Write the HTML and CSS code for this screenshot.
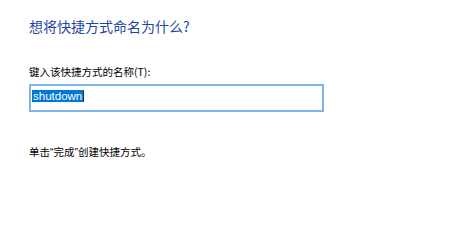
FILE: index.html
```html
<html>
    <link rel="stylesheet" href="styles.css">
<head>
    <meta charset="UTF-8">
    <meta name="viewport" content="width=device-width, initial-scale=1.0">
</head>
<body>
    <div class="page">
        <div class="title">想将快捷方式命名为什么?</div>
        <div class="label">键入该快捷方式的名称(T):</div>
        <div class="textbox"><span class="selected">shutdown</span><span class="caret"></span></div>
        <div class="hint">单击“完成”创建快捷方式。</div>
    </div>
</body>
</html>
```
FILE: styles.css
```css
body {
    margin: 0;
    background-color: #fff;
    font-family: "Noto Sans CJK SC", sans-serif;
    color: #000;
}

.page {
    padding: 16px 0 0 29px;
}

.title {
    font-size: 14px;
    line-height: 20px;
    color: #1f45a8;
}

.label {
    margin-top: 29px;
    font-size: 10.5px;
    line-height: 14px;
}

.textbox {
    margin-top: 5px;
    width: 295px;
    height: 28px;
    box-sizing: border-box;
    border: 2px solid #7eb4ea;
    padding: 4px 0 0 1px;
    display: flex;
    align-items: flex-start;
}

.selected {
    background-color: #0078d7;
    color: #fff;
    font-family: "Liberation Sans", "Noto Sans CJK SC", sans-serif;
    font-size: 11.5px;
    line-height: 12px;
    height: 12px;
    padding: 0 1px;
}

.caret {
    width: 1px;
    height: 12px;
    background-color: #333;
}

.hint {
    margin-top: 33px;
    font-family: "Liberation Sans", "Noto Sans CJK SC", sans-serif;
    font-size: 10.5px;
    line-height: 14px;
}
```
